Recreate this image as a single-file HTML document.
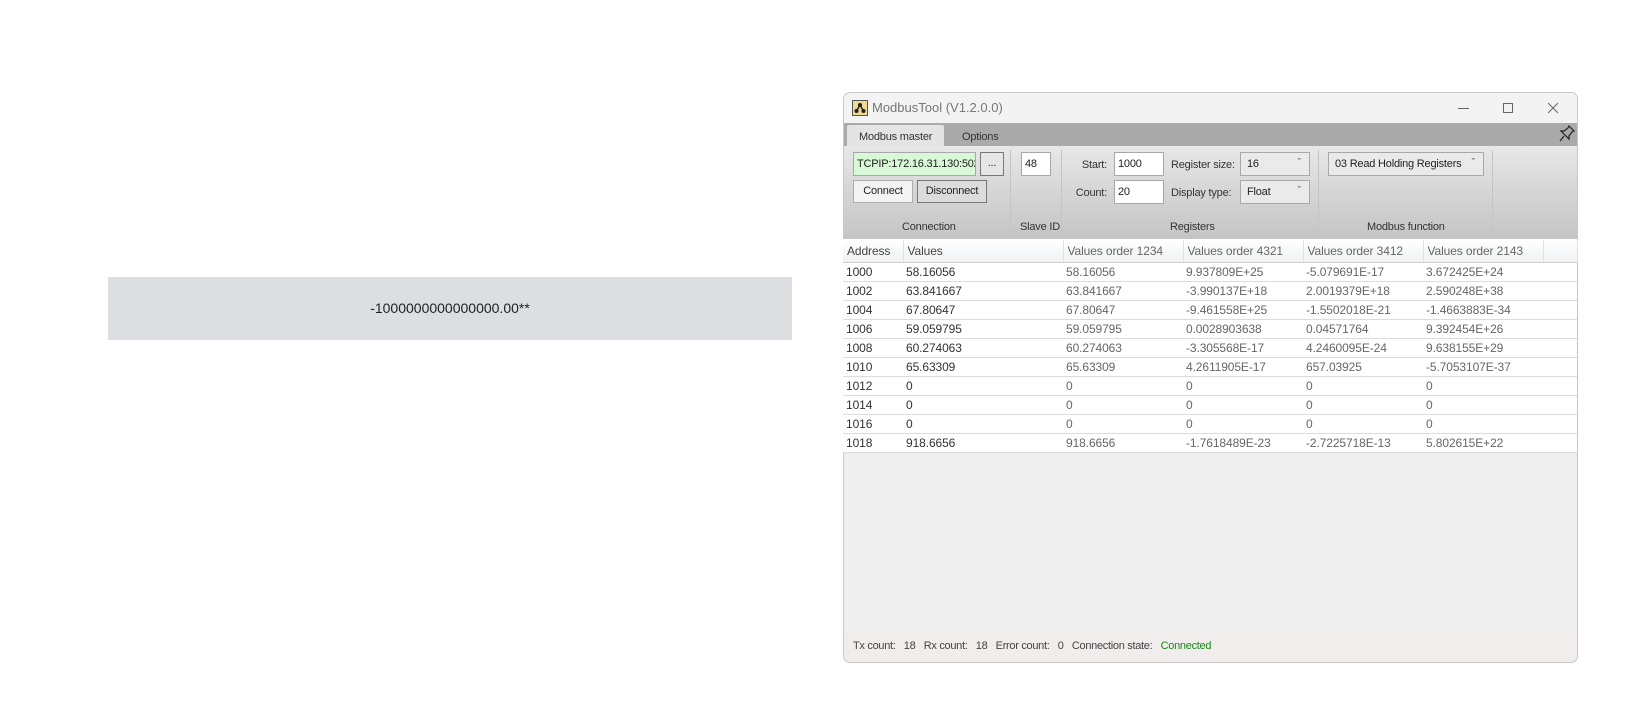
<!DOCTYPE html>
<html><head><meta charset="utf-8"><style>
*{margin:0;padding:0;box-sizing:border-box}
body{width:1629px;height:706px;background:#fff;position:relative;overflow:hidden;font-family:"Liberation Sans",sans-serif;font-size:12px;color:#222}
.a{position:absolute}
.box{position:absolute;background:#fff;border:1px solid #a8a8a8;padding:4px 3px;font-size:11px;line-height:14px;white-space:nowrap;overflow:hidden;letter-spacing:-0.2px}
.btn{position:absolute;background:#f4f4f4;border:1px solid #adadad;text-align:center;line-height:21px;font-size:11px;letter-spacing:-0.2px}
.lbl{position:absolute;font-size:11px;color:#333;white-space:nowrap;letter-spacing:-0.2px}
.sep{position:absolute;width:1px;background:#c4c4c4;top:150px;height:84px}
.cb::after{content:"\02C7";position:absolute;right:8px;top:3px;font-size:11px;color:#555}
table{border-collapse:collapse;position:absolute;left:843px;top:240px;font-size:12px;letter-spacing:-0.1px}
td{height:19px;border-bottom:1px solid #dcdcdc;padding:0 0 0 3px;white-space:nowrap;line-height:18px;color:#333}
td.g{color:#666}
th{height:22px;font-weight:normal;text-align:left;padding-left:4px;color:#444;border-right:1px solid #e2e2e2;border-bottom:1px solid #d0d0d0;background:linear-gradient(#fff,#f0f1f3)}
</style></head><body>
<div class="a" style="left:108px;top:277px;width:684px;height:63px;background:#dcdee1;text-align:center;line-height:63px;font-size:14px;color:#222">-1000000000000000.00**</div>

<div class="a" style="left:843px;top:92px;width:735px;height:571px;border:1px solid #c8c8c8;border-radius:7px;background:#efefef;overflow:hidden">
 <div class="a" style="left:0;top:0;width:735px;height:31px;background:#f3f3f3"></div>
</div>
<div class="a" style="left:852px;top:100px;width:16px;height:16px;background:#f0d890;border:1px solid #555"><svg width="14" height="14" viewBox="0 0 14 14"><circle cx="7" cy="4" r="2" fill="#222"/><circle cx="3.5" cy="10" r="2" fill="#222"/><circle cx="10.5" cy="10" r="2" fill="#222"/><path d="M7 4L3.5 10M7 4L10.5 10" stroke="#222" stroke-width="1.5"/></svg></div>
<div class="lbl" style="left:872px;top:100px;font-size:13px;color:#777;letter-spacing:0">ModbusTool (V1.2.0.0)</div>
<div class="a" style="left:1458px;top:108px;width:11px;height:1px;background:#666"></div>
<div class="a" style="left:1503px;top:103px;width:10px;height:10px;border:1px solid #666"></div>
<svg class="a" style="left:1547px;top:102px" width="12" height="12"><path d="M1 1L11 11M11 1L1 11" stroke="#666" stroke-width="1"/></svg>
<div class="a" style="left:844px;top:123px;width:733px;height:23px;background:#aaaaaa"></div>
<div class="a" style="left:847px;top:125px;width:97px;height:21px;background:#e4e4e4;border-radius:2px 2px 0 0"></div>
<div class="lbl" style="left:859px;top:131px">Modbus master</div>
<div class="lbl" style="left:962px;top:131px">Options</div>
<svg class="a" style="left:1558px;top:124px" width="18" height="20"><path d="M11 2l5 5-2 1-3 4 0 3-8-8 3 0 4-3z M6 12l-4 5" fill="none" stroke="#222" stroke-width="1.2"/></svg>
<div class="a" style="left:844px;top:146px;width:733px;height:89px;background:linear-gradient(#e8e8e8,#d6d6d6 50%,#c6c6c6)"></div>
<div class="box" style="left:853px;top:152px;width:123px;height:24px;background:#d8f8d8">TCPIP:172.16.31.130:502</div>
<div class="btn" style="left:980px;top:152px;width:24px;height:24px;background:#e6e6e6;border-color:#777">...</div>
<div class="sep" style="left:1010px"></div>
<div class="box" style="left:1021px;top:152px;width:30px;height:24px">48</div>
<div class="sep" style="left:1061px"></div>
<div class="btn" style="left:853px;top:180px;width:60px;height:23px">Connect</div>
<div class="btn" style="left:917px;top:180px;width:70px;height:23px;background:#dcdcdc;border-color:#777">Disconnect</div>
<div class="lbl" style="left:902px;top:221px">Connection</div>
<div class="lbl" style="left:1020px;top:221px">Slave ID</div>
<div class="lbl" style="left:1072px;top:159px;width:35px;text-align:right">Start:</div>
<div class="lbl" style="left:1066px;top:187px;width:41px;text-align:right">Count:</div>
<div class="box" style="left:1114px;top:152px;width:50px;height:24px">1000</div>
<div class="box" style="left:1114px;top:180px;width:50px;height:24px">20</div>
<div class="lbl" style="left:1171px;top:159px">Register size:</div>
<div class="lbl" style="left:1171px;top:187px">Display type:</div>
<div class="box cb" style="left:1240px;top:152px;width:70px;height:24px;background:#eaeaea;padding-left:6px">16</div>
<div class="box cb" style="left:1240px;top:180px;width:70px;height:24px;background:#eaeaea;padding-left:6px">Float</div>
<div class="lbl" style="left:1170px;top:221px">Registers</div>
<div class="sep" style="left:1318px"></div>
<div class="box cb" style="left:1328px;top:152px;width:156px;height:24px;background:#eaeaea;padding-left:6px;padding-right:20px">03 Read Holding Registers</div>
<div class="lbl" style="left:1367px;top:221px">Modbus function</div>
<div class="sep" style="left:1492px"></div>
<div class="a" style="left:844px;top:235px;width:733px;height:4px;background:#c4c4c4"></div>
<div class="a" style="left:843px;top:239px;width:734px;height:213px;background:#fff"></div>
<table>
<tr><th style="width:60px">Address</th><th style="width:160px">Values</th><th style="width:120px;color:#666">Values order 1234</th><th style="width:120px;color:#666">Values order 4321</th><th style="width:120px;color:#666">Values order 3412</th><th style="width:120px;color:#666">Values order 2143</th><th style="width:34px"></th></tr>
<tr><td>1000</td><td>58.16056</td><td class="g">58.16056</td><td class="g">9.937809E+25</td><td class="g">-5.079691E-17</td><td class="g">3.672425E+24</td><td></td></tr>
<tr><td>1002</td><td>63.841667</td><td class="g">63.841667</td><td class="g">-3.990137E+18</td><td class="g">2.0019379E+18</td><td class="g">2.590248E+38</td><td></td></tr>
<tr><td>1004</td><td>67.80647</td><td class="g">67.80647</td><td class="g">-9.461558E+25</td><td class="g">-1.5502018E-21</td><td class="g">-1.4663883E-34</td><td></td></tr>
<tr><td>1006</td><td>59.059795</td><td class="g">59.059795</td><td class="g">0.0028903638</td><td class="g">0.04571764</td><td class="g">9.392454E+26</td><td></td></tr>
<tr><td>1008</td><td>60.274063</td><td class="g">60.274063</td><td class="g">-3.305568E-17</td><td class="g">4.2460095E-24</td><td class="g">9.638155E+29</td><td></td></tr>
<tr><td>1010</td><td>65.63309</td><td class="g">65.63309</td><td class="g">4.2611905E-17</td><td class="g">657.03925</td><td class="g">-5.7053107E-37</td><td></td></tr>
<tr><td>1012</td><td>0</td><td class="g">0</td><td class="g">0</td><td class="g">0</td><td class="g">0</td><td></td></tr>
<tr><td>1014</td><td>0</td><td class="g">0</td><td class="g">0</td><td class="g">0</td><td class="g">0</td><td></td></tr>
<tr><td>1016</td><td>0</td><td class="g">0</td><td class="g">0</td><td class="g">0</td><td class="g">0</td><td></td></tr>
<tr><td>1018</td><td>918.6656</td><td class="g">918.6656</td><td class="g">-1.7618489E-23</td><td class="g">-2.7225718E-13</td><td class="g">5.802615E+22</td><td></td></tr>
</table>
<div class="a" style="left:844px;top:631px;width:733px;height:31px;background:#f1edec;border-radius:0 0 7px 7px"></div>
<div class="lbl" style="left:853px;top:640px;font-size:11px;color:#444;letter-spacing:-0.3px">Tx count:&nbsp;&nbsp; 18&nbsp;&nbsp; Rx count:&nbsp;&nbsp; 18&nbsp;&nbsp; Error count:&nbsp;&nbsp; 0&nbsp;&nbsp; Connection state:&nbsp;&nbsp; <span style="color:#1a8a1a">Connected</span></div>
</body></html>
